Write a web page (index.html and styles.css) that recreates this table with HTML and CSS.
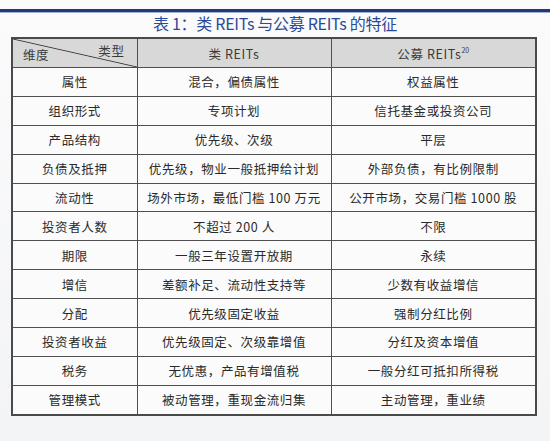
FILE: index.html
```html
<!DOCTYPE html>
<html lang="zh-CN">
<head>
<meta charset="utf-8">
<link rel="stylesheet" href="styles.css">
</head>
<body>
<div class="page">
  <div class="topbar"></div>
  <h1 class="title">表 1：类 REITs 与公募 REITs 的特征</h1>
  <table class="grid">
    <colgroup>
      <col class="c1"><col class="c2"><col class="c3">
    </colgroup>
    <thead>
      <tr class="head">
        <th class="diag"><span class="d-top">类型</span><span class="d-bot">维度</span></th>
        <th>类 REITs</th>
        <th>公募 REITs<sup>20</sup></th>
      </tr>
    </thead>
    <tbody>
      <tr><td>属性</td><td>混合，偏债属性</td><td>权益属性</td></tr>
      <tr><td>组织形式</td><td>专项计划</td><td>信托基金或投资公司</td></tr>
      <tr><td>产品结构</td><td>优先级、次级</td><td>平层</td></tr>
      <tr><td>负债及抵押</td><td>优先级，物业一般抵押给计划</td><td>外部负债，有比例限制</td></tr>
      <tr><td>流动性</td><td>场外市场，最低门槛 100 万元</td><td>公开市场，交易门槛 1000 股</td></tr>
      <tr><td>投资者人数</td><td>不超过 200 人</td><td>不限</td></tr>
      <tr><td>期限</td><td>一般三年设置开放期</td><td>永续</td></tr>
      <tr><td>增信</td><td>差额补足、流动性支持等</td><td>少数有收益增信</td></tr>
      <tr><td>分配</td><td>优先级固定收益</td><td>强制分红比例</td></tr>
      <tr><td>投资者收益</td><td>优先级固定、次级靠增值</td><td>分红及资本增值</td></tr>
      <tr><td>税务</td><td>无优惠，产品有增值税</td><td>一般分红可抵扣所得税</td></tr>
      <tr><td>管理模式</td><td>被动管理，重现金流归集</td><td>主动管理，重业绩</td></tr>
    </tbody>
  </table>
</div>
</body>
</html>
```
FILE: styles.css
```css
html, body {
  margin: 0;
  padding: 0;
}
body {
  width: 550px;
  height: 441px;
  overflow: hidden;
  background: linear-gradient(to bottom, #fbfbfc 0%, #f3f4f6 100%);
  font-family: "Noto Sans CJK SC", "Noto Sans", sans-serif;
}
.page {
  padding-top: 9px;
}
.topbar {
  height: 3px;
  background: #1d3a7c;
  box-shadow: 0 1px 0 #9fb0d0;
}
.title {
  margin: 0;
  height: 25px;
  line-height: 23px;
  text-align: center;
  font-size: 16px;
  font-weight: 400;
  color: #2a4a98;
  letter-spacing: -0.3px;
}
.grid {
  margin-left: 11px;
  width: 524px;
  border-collapse: collapse;
  table-layout: fixed;
  border: 2px solid #4a4a4a;
  font-size: 12.5px;
  color: #2a2a2a;
  letter-spacing: 0.6px;
}
.c1 { width: 125px; }
.c2 { width: 194px; }
.c3 { width: 205px; }
.grid th, .grid td {
  border: 1.5px solid #4f4f4f;
  text-align: center;
  padding: 0;
  font-weight: 400;
}
.grid td {
  height: 27.9px;
  background: #fbfbfb;
}
.head th {
  height: 28px;
  background: #d8d8d8;
  color: #3a3a3a;
}
.head sup {
  font-size: 7px;
  vertical-align: 6px;
  letter-spacing: 0;
}
.diag {
  position: relative;
  background: linear-gradient(to top right, #d8d8d8 calc(50% - 0.9px), #3d3d3d 50%, #d8d8d8 calc(50% + 0.9px)) !important;
}
.d-top {
  position: absolute;
  right: 12px;
  top: 2px;
}
.d-bot {
  position: absolute;
  left: 10px;
  bottom: 3px;
}
```
